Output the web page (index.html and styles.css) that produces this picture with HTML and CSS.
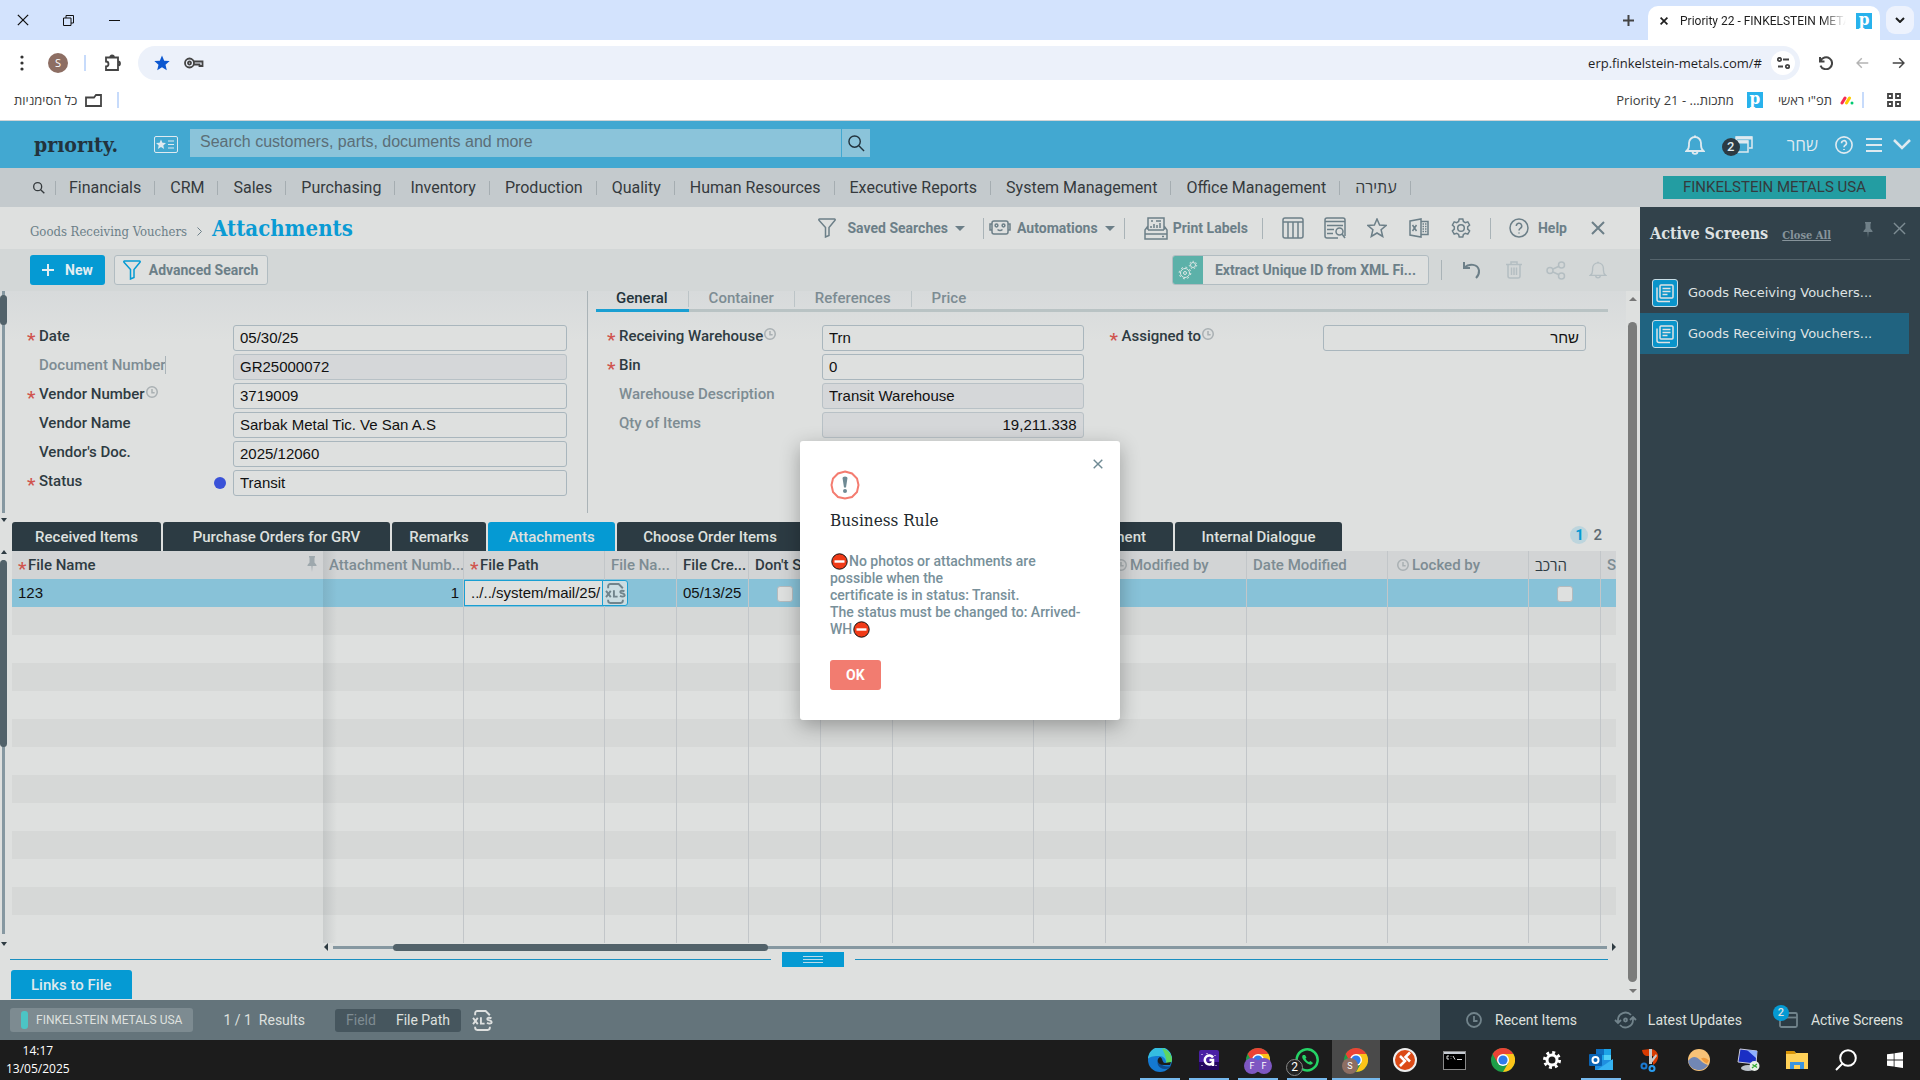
FILE: index.html
```html
<!DOCTYPE html>
<html lang="en">
<head>
<meta charset="utf-8">
<title>Priority 22 - FINKELSTEIN METALS USA</title>
<link rel="stylesheet" href="styles.css">
</head>
<body>
<svg class="sprite" aria-hidden="true">
  <symbol id="x" viewBox="0 0 14 14"><path d="M1 1l12 12M13 1L1 13"/></symbol>
  <symbol id="lens" viewBox="0 0 18 18"><circle cx="7" cy="7" r="6"/><path d="M11.5 11.5L17 17"/></symbol>
  <symbol id="funnel" viewBox="0 0 18 20"><path d="M1.500 1h15a.7.7 0 0 1 .5 1.200L11 9.500V17.500L7.500 19V9.500L1 2.200A.7.7 0 0 1 1.500 1z"/></symbol>
  <symbol id="bell" viewBox="0 0 20 20"><path d="M1.500 16h17c-2-1.500-2.500-3-2.500-6V8a6 6 0 0 0-12 0v2c0 3-.5 4.500-2.500 6zM7.500 16.500a2.500 2.300 0 0 0 5 0M9 1.500h2"/></symbol>
  <symbol id="help" viewBox="0 0 20 20"><circle cx="10" cy="10" r="9"/><path d="M7.300 8a2.700 2.700 0 1 1 4 2.300c-1 .6-1.300 1-1.300 2.200M10 14.500v1"/></symbol>
  <symbol id="pin" viewBox="0 0 10 16"><path d="M2 0h6v1.500H7.500V6.500L9.500 9v1H5.600L5 16l-.6-6H.5V9l2-2.500v-5H2z"/></symbol>
  <symbol id="clock" viewBox="0 0 16 16"><circle cx="8" cy="8" r="7"/><path d="M8 4v5h3.500"/></symbol>
  <symbol id="xls" viewBox="0 0 20 20"><path d="M3 5V3a2 2 0 0 1 2-2h8l4 4M3 16v1a2 2 0 0 0 2 2h10a2 2 0 0 0 2-2v-1M1 7.500l4.500 6M5.500 7.500l-4.500 6M8.500 7v6H12M18.500 8c-1.500-1-4-.8-4 .6 0 1.700 4.300 1 4.300 3 0 1.600-3 1.700-4.500.6"/></symbol>
  <symbol id="gear" viewBox="0 0 20 20"><path d="M8.200 1h3.600l.6 2.500 1.900 1.100 2.500-.8 1.800 3.200-1.900 1.800v2.300l1.900 1.800-1.800 3.200-2.500-.8-1.900 1.100-.6 2.500H8.200l-.6-2.500-1.900-1.100-2.500.8-1.800-3.200 1.900-1.800V8.800L1.400 7l1.800-3.200 2.500.8 1.900-1.100z"/><circle cx="10" cy="10" r="3.300"/></symbol>
  <symbol id="docs" viewBox="0 0 20 20"><rect x="5" y="2" width="13" height="13" rx="1"/><path d="M2 4.500v12a2 2 0 0 0 2 2h11M7.500 5.500h8M7.500 8.500h8M7.500 11.500h5"/></symbol>
  <symbol id="arrow" viewBox="0 0 18 16"><path d="M1 8h15M10 1.500L16.500 8 10 14.500"/></symbol>
  <symbol id="chrome" viewBox="0 0 24 24"><circle cx="12" cy="12" r="12" fill="#1e9e48"/><path d="M1.600 6A12 12 0 0 1 22.400 6H12l-5.200 9z" fill="#ea4335"/><path d="M22.400 6A12 12 0 0 1 12 24l5.200-9L12 6z" fill="#fcc419"/><circle cx="12" cy="12" r="6" fill="#fff"/><circle cx="12" cy="12" r="4.600" fill="#2f7bea"/></symbol>
  <symbol id="noentry" viewBox="0 0 17 17"><circle cx="8.500" cy="8.500" r="7.700" fill="#f03a17" stroke="#111" stroke-width="1"/><rect x="3.500" y="7.300" width="10" height="2.400" fill="#fff"/></symbol>
</svg>

<header class="browser">
  <div class="tabstrip">
    <button class="wbtn" aria-label="Close"><svg width="12" height="12"><use href="#x"/></svg></button>
    <button class="wbtn" aria-label="Restore"><svg width="11" height="11" viewBox="0 0 11 11"><path d="M.5 3h7.500v7.500H.5zM3 3V.5h7.500V8H8"/></svg></button>
    <button class="wbtn" aria-label="Minimize"><svg width="11" height="11" viewBox="0 0 11 11"><path d="M0 5.500h11"/></svg></button>
    <span class="grow"></span>
    <button class="wbtn plus" aria-label="New tab"><svg width="11" height="11" viewBox="0 0 11 11"><path d="M0 5.500h11M5.500 0v11"/></svg></button>
    <div class="tab">
      <button class="tabx" aria-label="Close tab"><svg width="8" height="8"><use href="#x"/></svg></button>
      <span class="tabtitle">Priority 22 - FINKELSTEIN METALS USA</span>
      <span class="favicon">p</span>
    </div>
    <button class="tabmenu" aria-label="Search tabs"><svg width="10" height="6" viewBox="0 0 10 6"><path d="M1 1l4 4 4-4"/></svg></button>
  </div>
  <div class="toolbar">
    <button class="ibtn dots" aria-label="Menu"><svg width="4" height="16" viewBox="0 0 4 16"><circle cx="2" cy="2" r="1.600"/><circle cx="2" cy="8" r="1.600"/><circle cx="2" cy="14" r="1.600"/></svg></button>
    <span class="avatar">S</span>
    <i class="bar"></i>
    <button class="ibtn puzzle" aria-label="Extensions"><svg width="18" height="18" viewBox="0 0 18 18"><path d="M2 3.500h12v12.500H2v-3.500a2.500 2.500 0 0 0 0-5zM6 3.500a2 2 0 0 1 4 0M14 7.500a2 2 0 0 1 0 4"/></svg></button>
    <div class="address">
      <svg class="star" width="16" height="16" viewBox="0 0 16 16"><path d="M8 .5l2.200 5.200 5.500.4-4.200 3.600 1.300 5.500L8 12.200l-4.800 3 1.300-5.500L.3 6.100l5.500-.4z"/></svg>
      <svg class="line" width="20" height="12" viewBox="0 0 20 12"><circle cx="5.500" cy="6" r="4.500"/><circle cx="5.500" cy="6" r="1.500"/><path d="M10 4.500h8.500v4.500h-3V7.500H9.500"/></svg>
      <input class="url" aria-label="Address" value="erp.finkelstein-metals.com/#">
      <span class="tune"><svg class="line" width="13" height="12" viewBox="0 0 13 12"><circle cx="2.500" cy="2.500" r="1.700"/><path d="M6 2.500h6M1 9.500h5"/><circle cx="10.500" cy="9.500" r="1.700"/></svg></span>
    </div>
    <button class="ibtn nav" aria-label="Reload"><svg width="14" height="14" viewBox="0 0 14 14"><path d="M1 1v4.500h4.500M1.500 5A6 6 0 1 1 1.500 9.500"/></svg></button>
    <button class="ibtn nav faded" aria-label="Forward"><svg class="flip" width="13" height="12"><use href="#arrow"/></svg></button>
    <button class="ibtn nav" aria-label="Back"><svg width="13" height="12"><use href="#arrow"/></svg></button>
  </div>
  <nav class="bookmarks">
    <a href="#all">כל הסימניות</a>
    <svg class="line" width="17" height="13" viewBox="0 0 17 13"><path d="M1 3.500h8l2-2.500h5v11H1z"/></svg>
    <i class="bar"></i>
    <span class="grow"></span>
    <a href="#p21" dir="rtl">מתכות... - Priority 21</a>
    <span class="favicon bm">p</span>
    <a href="#t">תפ"י ראשי</a>
    <svg width="14" height="9" viewBox="0 0 14 9" stroke-linecap="round" stroke-width="3"><path d="M2 7l3-5" stroke="#f62b54"/><path d="M6.500 7l3-5" stroke="#fc0"/><path d="M12 7v0" stroke="#00ca72"/></svg>
    <i class="bar"></i>
    <svg class="line apps" width="14" height="14" viewBox="0 0 14 14"><path d="M1 1h4v4H1zM9 1h4v4H9zM1 9h4v4H1zM9 9h4v4H9z"/></svg>
  </nav>
</header>

<div class="app">
  <header class="apphead">
    <a class="logo" href="#home">prıorıty.</a>
    <svg class="card" width="24" height="17" viewBox="0 0 24 17"><rect x=".5" y=".5" width="23" height="16" rx="1.500"/><path d="M14 5h6M14 8.500h6M14 12h6"/><path class="fill" d="M7 3.500l1.400 3.300 3.600.3-2.700 2.400.8 3.500L7 11.100 3.900 13l.8-3.500L2 7.100l3.600-.3z"/></svg>
    <form class="search"><input type="text" aria-label="Search" placeholder="Search customers, parts, documents and more"><button type="button" aria-label="Search"><svg width="17" height="17"><use href="#lens"/></svg></button></form>
    <span class="grow"></span>
    <div class="headicons">
      <svg class="hbell" width="20" height="20"><use href="#bell"/></svg>
      <span class="wins"><b>2</b><svg width="18" height="17" viewBox="0 0 18 17"><path d="M1 4V1h16v11h-3M1 5h12v11H1"/><path d="M1 2h16M1 6h12" stroke-width="3"/></svg></span>
      <span class="user">שחר</span>
      <svg class="hhelp" width="18" height="18"><use href="#help"/></svg>
      <svg class="burger" width="16" height="14" viewBox="0 0 16 14"><path d="M0 1h16M0 7h16M0 13h16"/></svg>
      <svg class="chev" width="18" height="11" viewBox="0 0 18 11"><path d="M1 1l8 8 8-8"/></svg>
    </div>
  </header>
  <nav class="menu">
    <svg class="menulens" width="12" height="12"><use href="#lens"/></svg>
    <a href="#1">Financials</a><a href="#2">CRM</a><a href="#3">Sales</a><a href="#4">Purchasing</a><a href="#5">Inventory</a><a href="#6">Production</a><a href="#7">Quality</a><a href="#8">Human Resources</a><a href="#9">Executive Reports</a><a href="#10">System Management</a><a href="#11">Office Management</a><a href="#12">עתירה</a>
    <span class="grow"></span>
    <span class="company">FINKELSTEIN METALS USA</span>
  </nav>

  <div class="work">
    <main class="main">
      <div class="titlebar">
        <div class="crumbs"><a href="#grv">Goods Receiving Vouchers</a><svg width="5" height="9" viewBox="0 0 5 9"><path d="M.5.500l4 4-4 4"/></svg><h1>Attachments</h1></div>
        <div class="tools">
          <button class="saved"><svg width="18" height="20"><use href="#funnel"/></svg>Saved Searches<i class="caret"></i></button>
          <i class="sep"></i>
          <button class="auto"><svg width="22" height="16" viewBox="0 0 22 16"><rect x="3" y="1" width="16" height="13" rx="2"/><circle cx="7.500" cy="5.500" r="1.400"/><circle cx="14.500" cy="5.500" r="1.400"/><path d="M8.500 9.500q2.500 2 5 0M3 4H1v6h2M19 4h2v6h-2"/></svg>Automations<i class="caret"></i></button>
          <i class="sep"></i>
          <button class="print"><svg width="24" height="23" viewBox="0 0 24 23"><path d="M4 13V1h16v12M4 9L1 13v9h22v-9l-3-4M4 13h16M1.500 17h21M7 11V9M10 11V7M13 11V8M16 11V6M7 4h2M12 4h5M18 19.500h2"/></svg>Print Labels</button>
          <i class="sep"></i>
          <button class="tool" aria-label="Table"><svg width="22" height="22" viewBox="0 0 22 22"><rect x="1" y="1" width="20" height="20" rx="2"/><path d="M1 5h20M6 5v16M11 5v16M16 5v16"/></svg></button>
          <button class="tool" aria-label="Form view"><svg width="22" height="22" viewBox="0 0 22 22"><path d="M14 21H3a2 2 0 0 1-2-2V3a2 2 0 0 1 2-2h16a2 2 0 0 1 2 2v16M1 4.500h20M3 8.500h16M3 12.500h7M3 16.500h6"/><circle cx="15.500" cy="14.500" r="3.500"/><path d="M18 17l3 4"/></svg></button>
          <button class="tool" aria-label="Favorite"><svg width="20" height="20" viewBox="0 0 20 20"><path d="M10 1l2.600 6 6.400.5-4.900 4.200 1.600 6.800L10 15l-5.700 3.500 1.600-6.800L1 7.500 7.400 7z"/></svg></button>
          <button class="tool" aria-label="Excel"><svg width="20" height="20" viewBox="0 0 20 20"><path d="M1 3l11-2v18L1 17zM12 3.500h7v13h-7M3.500 7l4 6M7.500 7l-4 6M13.500 6h1.500M16 6h1.500M13.500 8.500h1.500M16 8.500h1.500M13.500 11h1.500M16 11h1.500M13.500 13.500h1.500M16 13.500h1.500"/></svg></button>
          <button class="tool" aria-label="Settings"><svg width="20" height="20"><use href="#gear"/></svg></button>
          <i class="sep"></i>
          <button class="helpbtn"><svg width="20" height="20"><use href="#help"/></svg>Help</button>
          <button class="close" aria-label="Close screen"><svg width="14" height="14"><use href="#x"/></svg></button>
        </div>
      </div>
      <div class="actions">
        <button class="new"><svg width="12" height="12" viewBox="0 0 12 12"><path d="M0 6h12M6 0v12"/></svg>New</button>
        <button class="adv"><svg width="18" height="20"><use href="#funnel"/></svg>Advanced Search</button>
        <span class="grow"></span>
        <button class="extract"><span class="gears"><svg width="20" height="20" viewBox="0 0 20 20"><circle cx="7" cy="13" r="4.500"/><circle cx="7" cy="13" r="1.500"/><circle cx="7" cy="13" r="5.800" stroke-dasharray="2 2.500"/><circle cx="15" cy="5" r="2.500"/><circle cx="15" cy="5" r="3.700" stroke-dasharray="1.500 1.800"/></svg></span><span class="exlabel">Extract Unique ID from XML Fi...</span></button>
        <i class="sep"></i>
        <button class="act on" aria-label="Undo"><svg width="18" height="18" viewBox="0 0 18 18"><path d="M1 1v6h6M1.500 6.500C6 2 15 3 16 9.500c.3 3-1 5.500-3 7.500"/></svg></button>
        <button class="act" aria-label="Delete"><svg width="18" height="18" viewBox="0 0 18 18"><path d="M1 3.500h16M6 3.500V1h6v2.500M3 3.500V15a2 2 0 0 0 2 2h8a2 2 0 0 0 2-2V3.500M6.500 6.500v7.500M9 6.500v7.500M11.500 6.500v7.500"/></svg></button>
        <button class="act" aria-label="Share"><svg width="20" height="19" viewBox="0 0 20 19"><circle cx="4" cy="9.500" r="3"/><circle cx="15.500" cy="4" r="3"/><circle cx="15.500" cy="15" r="3"/><path d="M7 8l6-2.800M7 11l6 2.800"/></svg></button>
        <button class="act" aria-label="Notify"><svg width="18" height="18"><use href="#bell"/></svg></button>
      </div>

      <div class="content">
        <div class="page">
          <div class="upper">
            <div class="rail"><b class="r1"></b><i class="dn"></i></div>
            <div class="lform">
              <label for="f1" class="req">Date</label><input id="f1" value="05/30/25">
              <label for="f2" class="ro caretline">Document Number</label><input id="f2" readonly value="GR25000072">
              <label for="f3" class="req">Vendor Number<svg width="12" height="12"><use href="#clock"/></svg></label><input id="f3" value="3719009">
              <label for="f4">Vendor Name</label><input id="f4" value="Sarbak Metal Tic. Ve San A.S">
              <label for="f5">Vendor's Doc.</label><input id="f5" value="2025/12060">
              <label for="f6" class="req status">Status</label><input id="f6" value="Transit">
            </div>
            <div class="rform">
              <div class="subtabs"><button class="cur">General</button><button>Container</button><button>References</button><button>Price</button></div>
              <div class="cols">
                <div class="fields">
                  <label for="g1" class="req">Receiving Warehouse<svg width="12" height="12"><use href="#clock"/></svg></label><input id="g1" value="Trn">
                  <label for="g2" class="req">Bin</label><input id="g2" value="0">
                  <label for="g3" class="ro">Warehouse Description</label><input id="g3" readonly value="Transit Warehouse">
                  <label for="g4" class="ro">Qty of Items</label><input id="g4" class="num" readonly value="19,211.338">
                </div>
                <div class="fields second">
                  <label for="h1" class="req">Assigned to<svg width="12" height="12"><use href="#clock"/></svg></label><input id="h1" dir="rtl" value="שחר">
                </div>
              </div>
            </div>
          </div>

          <div class="lower">
            <div class="rail low"><i class="up"></i><b class="r2"></b><i class="dn"></i></div>
            <div class="gridzone">
              <div class="tabs">
                <button class="t1">Received Items</button><button class="t2">Purchase Orders for GRV</button><button class="t3">Remarks</button><button class="t4 cur">Attachments</button><button class="t5">Choose Order Items</button><button class="t6">Shipment</button><button class="t7">Internal Dialogue</button>
                <span class="grow"></span>
                <span class="pager"><b>1</b>2</span>
              </div>
              <div class="tablewrap">
              <table>
                <colgroup><col class="c311"><col class="c141"><col class="c141"><col class="c72"><col class="c72"><col class="c72"><col class="c72"><col class="c141"><col class="c72"><col class="c141"><col class="c141"><col class="c141"><col class="c72"><col></colgroup>
                <thead><tr><th class="req first">File Name<svg class="pinned" width="10" height="16"><use href="#pin"/></svg></th><th class="ro">Attachment Numb...</th><th class="req">File Path</th><th class="ro">File Na...</th><th>File Cre...</th><th>Don't S</th><th></th><th></th><th></th><th class="ro"><svg width="12" height="12"><use href="#clock"/></svg>Modified by</th><th class="ro">Date Modified</th><th class="ro"><svg width="12" height="12"><use href="#clock"/></svg>Locked by</th><th class="heb">הרכב</th><th class="ro">S</th></tr></thead>
                <tbody>
                <tr class="sel"><td>123</td><td class="right">1</td><td class="edit"><input aria-label="File Path" value="../../system/mail/25/"><button aria-label="Open XLS"><svg width="21" height="21"><use href="#xls"/></svg></button></td><td></td><td>05/13/25</td><td class="mid"><input type="checkbox" aria-label="Don't send"></td><td></td><td></td><td></td><td></td><td></td><td></td><td class="mid"><input type="checkbox" aria-label="הרכב"></td><td></td></tr>
                <tr><td><td><td><td><td><td><td><td><td><td><td><td><td><td></tr>
                <tr><td><td><td><td><td><td><td><td><td><td><td><td><td><td></tr>
                <tr><td><td><td><td><td><td><td><td><td><td><td><td><td><td></tr>
                <tr><td><td><td><td><td><td><td><td><td><td><td><td><td><td></tr>
                <tr><td><td><td><td><td><td><td><td><td><td><td><td><td><td></tr>
                <tr><td><td><td><td><td><td><td><td><td><td><td><td><td><td></tr>
                <tr><td><td><td><td><td><td><td><td><td><td><td><td><td><td></tr>
                <tr><td><td><td><td><td><td><td><td><td><td><td><td><td><td></tr>
                <tr><td><td><td><td><td><td><td><td><td><td><td><td><td><td></tr>
                <tr><td><td><td><td><td><td><td><td><td><td><td><td><td><td></tr>
                <tr><td><td><td><td><td><td><td><td><td><td><td><td><td><td></tr>
                <tr><td><td><td><td><td><td><td><td><td><td><td><td><td><td></tr>
                </tbody>
              </table>
              </div>
              <div class="hscroll"><i class="lf"></i><span class="track"><b></b></span><i class="rt"></i></div>
            </div>
          </div>
          <div class="splitter"><i></i><b><svg width="20" height="7" viewBox="0 0 20 7"><path d="M0 .5h20M0 3.500h20M0 6.500h20"/></svg></b><i></i></div>
          <button class="links">Links to File</button>
        </div>
        <div class="vscroll"><i class="up"></i><b></b><i class="dn"></i></div>
      </div>
    </main>

    <aside class="panel">
      <div class="panelhead"><h2>Active Screens</h2><a href="#closeall">Close All</a><span class="grow"></span><svg class="ppin" width="10" height="16"><use href="#pin"/></svg><svg class="px" width="13" height="13"><use href="#x"/></svg></div>
      <a class="item" href="#s1"><span><svg width="20" height="20"><use href="#docs"/></svg></span>Goods Receiving Vouchers...</a>
      <a class="item cur" href="#s2"><span><svg width="20" height="20"><use href="#docs"/></svg></span>Goods Receiving Vouchers...</a>
    </aside>
  </div>

  <footer class="statusbar">
    <span class="chip"><i></i>FINKELSTEIN METALS USA</span>
    <span class="results">1 / 1&nbsp; Results</span>
    <span class="field"><em>Field</em>File Path</span>
    <svg class="sxls" width="21" height="21"><use href="#xls"/></svg>
    <span class="grow"></span>
    <div class="quick">
      <button class="q1"><svg width="16" height="16"><use href="#clock"/></svg>Recent Items</button>
      <button class="q2"><svg width="23" height="18" viewBox="0 0 23 18"><path d="M4 12V9a7.500 7.500 0 0 1 13-5M1 9l3 3 3-3M19 6v3a7.500 7.500 0 0 1-13 5M22 9l-3-3-3 3"/><circle cx="11.500" cy="9" r="1.500"/></svg>Latest Updates</button>
      <button class="q3"><b>2</b><svg width="19" height="16" viewBox="0 0 19 16"><rect x="1" y="1" width="17" height="14" rx="1.500"/><path d="M1 5.500h17"/></svg>Active Screens</button>
    </div>
  </footer>

  <div class="overlay">
    <section class="dialog" role="dialog" aria-labelledby="dt">
      <button class="dx" aria-label="Close"><svg width="10" height="10"><use href="#x"/></svg></button>
      <svg class="warn" width="30" height="30" viewBox="0 0 30 30"><path d="M15 1.500l7 2 5 5 1.500 6.500-1.500 7-5 5-7 1.500-7-1.500-5-5-1.500-7L3 8.500l5-5z" fill="none" stroke="#f47c70" stroke-width="2"/><g stroke="none" fill="#6f8a94"><path d="M12.500 8q0-1.500 2.500-1.500t2.500 1.500L16 17.500h-2z"/><circle cx="15" cy="21" r="2"/></g></svg>
      <h2 id="dt">Business Rule</h2>
      <p><svg width="19" height="17"><use href="#noentry"/></svg>No photos or attachments are possible when the<br>certificate is in status: Transit.<br>The status must be changed to: Arrived-WH<svg width="19" height="17"><use href="#noentry"/></svg></p>
      <button class="ok">OK</button>
    </section>
  </div>
</div>

<footer class="taskbar">
  <time>14:17<br>13/05/2025</time>
  <span class="grow"></span>
  <button class="run" aria-label="Edge"><svg width="24" height="24" viewBox="0 0 24 24"><circle cx="12" cy="12" r="12" fill="#1479d2"/><path d="M0 11A12 12 0 0 1 24 11c0 4-3 6-7 6 3-4-1-10-7-9C5 8 1 9 0 11z" fill="#35bde0"/><path d="M14 .3A12 12 0 0 1 24 11c0 4-3 6-7 6 3-2 1-9-3-16.700z" fill="#5fd55f"/><path d="M12 9c-5 5-2 12 5 12 3 0 5-1 6-3-3 1-9 1-10-3z" fill="#0f4a8c"/><path d="M12 9c-4 2-3 8 4 8h6l1-3-6 1c-3 0-2-5-5-6z" fill="#1c1c1c"/></svg></button>
  <button class="run" aria-label="G"><svg width="20" height="20" viewBox="0 0 20 20"><rect width="20" height="20" rx="2" fill="#4a1fa5"/><rect y="12" width="20" height="8" fill="#230660"/><path d="M14 7.500a4.500 4.500 0 1 0 0 5V10h-3.500M14 12v4" fill="none" stroke="#fff" stroke-width="2.500"/><path d="M3 4v1M8 3v1M16 5v1M3 15v1M17 15v1" stroke="#fff"/></svg></button>
  <button class="run" aria-label="Chrome profiles"><svg width="24" height="24"><use href="#chrome"/></svg><span class="dot f1">F</span><span class="dot f2">F</span></button>
  <button class="run" aria-label="WhatsApp"><svg width="24" height="24" viewBox="0 0 24 24"><path d="M1.500 22.500L3 17A10.500 10.500 0 1 1 7 21z" fill="#1c1c1c" stroke="#25d366" stroke-width="2.500"/><path d="M8 7c-2 2 0 5 3 7.500s5.500 3 7 .5l-2.500-2-1.500 1c-1.500-.5-3-2-3.500-3.500l1-1L10 7z" fill="#25d366"/></svg><span class="dot wa">2</span></button>
  <button class="run active" aria-label="Chrome"><svg width="24" height="24"><use href="#chrome"/></svg><span class="dot s1">S</span></button>
  <button aria-label="Remote"><svg width="24" height="24" viewBox="0 0 24 24"><circle cx="12" cy="12" r="11" fill="#dc4a16" stroke="#eee" stroke-width="2"/><path d="M7 8l5 5-5 5M17 4.500l-4.500 4.500L17 13.500" fill="none" stroke="#fff" stroke-width="2.500"/></svg></button>
  <button aria-label="Terminal"><svg width="23" height="19" viewBox="0 0 23 19"><rect x=".5" y=".5" width="22" height="18" fill="#000" stroke="#8a8a8a"/><path d="M1 2h21" stroke="#c7ccd4" stroke-width="2"/><path d="M6 5H4v3h2M8 5.500v.5M8 7.500v.5M10 5l2 3.500M14 8.500h5" stroke="#ddd" fill="none"/></svg></button>
  <button aria-label="Chrome"><svg width="24" height="24"><use href="#chrome"/></svg></button>
  <button aria-label="Settings"><svg width="18" height="18" viewBox="0 0 18 18"><g stroke="#fff" stroke-width="3"><circle cx="9" cy="9" r="5"/><circle cx="9" cy="9" r="7.500" stroke-dasharray="2.900 2.990"/></g></svg></button>
  <button class="run" aria-label="Outlook"><svg width="24" height="22" viewBox="0 0 24 22"><path d="M7 0h15v12H7z" fill="#1ca4e8"/><path d="M7 0h8v6H7z" fill="#0f6fc0"/><path d="M15 6h7v6h-7z" fill="#50d0f7"/><path d="M6 11l18 0v10H6z" fill="#1f8fe0"/><path d="M24 10v11L8 21z" fill="#35b3f2"/><rect y="5" width="13" height="12" rx="1" fill="#0a64b5"/><circle cx="6.500" cy="11" r="3" fill="none" stroke="#fff" stroke-width="2"/></svg></button>
  <button aria-label="Snip"><svg width="20" height="24" viewBox="0 0 20 24"><path d="M2 2l8-1c6 0 9 5 8 9s-3 6-5 7V8H9C6 8 3 8 2 2z" fill="#d83b01"/><path d="M9 1h3v15H9zM10 13l6-7 1 2-6 8z" fill="#c9c9c9"/><circle cx="4" cy="18" r="2.500" fill="none" stroke="#1b7ad1" stroke-width="2"/><circle cx="12" cy="20.500" r="2.500" fill="none" stroke="#2a9df0" stroke-width="2"/></svg></button>
  <button aria-label="Weather"><svg width="22" height="22" viewBox="0 0 22 22"><circle cx="11" cy="11" r="11" fill="#f8c277"/><path d="M13 9.500q4-2 8 2l-2 3q-3-1-6-5z" fill="#ef9a3c"/><path d="M0 12C4 7 8 7 12 11c3 3 5 4 8 5A11 11 0 0 1 0 12z" fill="#7187b5"/></svg></button>
  <button aria-label="Remote desktop"><svg width="23" height="24" viewBox="0 0 23 24"><path d="M3 1l17 2-1 13L1 14z" fill="#1a2fc4" stroke="#ccd" /><path d="M10 2l10 1-1 7z" fill="#8fb0ff"/><ellipse cx="11" cy="20" rx="7" ry="3" fill="#bcc3cb"/><circle cx="17.500" cy="18" r="5" fill="#e8efe8"/><path d="M15 20l5-4M15.500 16.500l2 1.500M18 18l2 1.500" stroke="#3a3" stroke-width="1.300"/></svg></button>
  <button aria-label="Explorer"><svg width="22" height="18" viewBox="0 0 22 18"><path d="M0 0h8l2 2h12v16H0z" fill="#ffd158"/><path d="M0 0h8l2 3H0z" fill="#d99508"/><path d="M4 18v-7h14v7h-4v-4H8v4z" fill="#3b94e0"/></svg></button>
  <button aria-label="Search"><svg class="flip" width="22" height="22" viewBox="0 0 22 22"><g stroke="#fff" stroke-width="2"><circle cx="9" cy="9" r="7.800"/><path d="M14.500 14.500L21 21"/></g></svg></button>
  <button aria-label="Start"><svg width="16" height="16" viewBox="0 0 16 16"><path fill="#fff" d="M0 2.300L6.700 1.400v6.200H0zM7.500 1.200L16 0v7.600H7.500zM0 8.400h6.700v6.200L0 13.700zM7.500 8.400H16V16l-8.500-1.200z"/></svg></button>
</footer>
</body>
</html>
```

FILE: styles.css
```css
* { box-sizing: border-box; }
body {
  margin: 0;
  min-height: 100vh;
  display: flex;
  flex-direction: column;
  font-family: Roboto, "Open Sans", sans-serif;
  font-size: 15px;
  color: #2e3b42;
  background: #dee0df;
}
button { font: inherit; color: inherit; background: none; border: 0; padding: 0; display: flex; align-items: center; }
a { color: inherit; text-decoration: none; }
h1, h2, p { margin: 0; }
svg { fill: none; stroke: currentColor; flex: none; }
.sprite { position: absolute; width: 0; height: 0; }
.grow { flex: 1; }
.flip { transform: scaleX(-1); }

/* Browser frame */
.browser { background: #fff; border-bottom: 1px solid #d0d4d6; color: #1f1f1f; font-family: "Open Sans", sans-serif; }
.tabstrip { height: 40px; display: flex; align-items: center; background: #d3e3fd; }
.wbtn { width: 46px; height: 40px; justify-content: center; color: #111; }
.wbtn:first-child { width: 45px; stroke-width: 1.500; }
.wbtn.plus { width: 40px; stroke-width: 2; color: #444; }
.tab { align-self: flex-end; display: flex; align-items: center; width: 232px; height: 34px; padding: 0 8px 5px 12px; background: #fff; border-radius: 10px 10px 0 0; font: 12px Roboto, sans-serif; }
.tabx svg { stroke-width: 3; }
.tabtitle { flex: 1; margin: 0 10px 0 12px; overflow: hidden; white-space: nowrap; -webkit-mask-image: linear-gradient(90deg, #000 85%, transparent); mask-image: linear-gradient(90deg, #000 85%, transparent); }
.favicon { width: 16px; height: 16px; background: #28b2ec; color: #fff; font: bold 17px/12px "DejaVu Serif Condensed", "DejaVu Serif", serif; text-align: center; }
.tabmenu { width: 28px; height: 28px; margin: 0 6px; justify-content: center; background: #edf2fd; border-radius: 9px; stroke-width: 2; }
.toolbar { height: 46px; padding: 0 14px 0 10px; display: flex; align-items: center; }
.dots { width: 24px; justify-content: center; color: #333; }
.dots svg { fill: currentColor; stroke: none; }
.avatar { width: 20px; height: 20px; margin-left: 14px; border-radius: 50%; background: #8d6e63; color: #fff; font-size: 11px; line-height: 20px; text-align: center; }
.bar { width: 2px; height: 16px; background: #c7dbfb; }
.toolbar .bar { margin-left: 16px; }
.puzzle { margin: 0 16px 0 18px; color: #444; stroke-width: 1.800; }
.address { flex: 1; height: 34px; padding: 0 5px 0 16px; display: flex; align-items: center; gap: 14px; background: #ecf1fa; border-radius: 17px; }
.star { fill: #0b57d0; stroke: none; }
.line { stroke-width: 1.800; color: #444; }
.url { flex: 1; border: 0; background: none; text-align: right; font: 13px "Open Sans", sans-serif; color: #1f1f1f; padding: 0; margin-right: -5px; }
.tune { width: 24px; height: 24px; border-radius: 50%; background: #fff; display: flex; align-items: center; justify-content: center; }
.nav { width: 36px; justify-content: center; stroke-width: 2; color: #444; }
.nav:nth-last-child(3) { margin-left: 8px; }
.nav:last-child { margin-right: -10px; }
.faded { color: #b4b4b4; }
.bookmarks { height: 34px; padding: 0 19px 6px 14px; display: flex; align-items: center; font-size: 13px; line-height: 18px; color: #3c3c3c; }
.bookmarks > .line:first-of-type { margin-left: 8px; }
.bookmarks .bar { margin-left: 15px; }
.bookmarks .favicon.bm { margin: 0 15px 0 13px; }
.bookmarks a + svg { margin-left: 8px; }
.bookmarks svg + .bar:nth-last-child(2) { margin-left: 8px; margin-right: 23px; }

/* Application shell */
.app { flex: 1; position: relative; display: flex; flex-direction: column; }
.apphead { height: 47px; padding-left: 34px; display: flex; align-items: center; background: #42a8d1; color: #dfeaf0; }
.logo { width: 120px; font: bold 21px "DejaVu Serif Condensed", "DejaVu Serif", serif; color: #22333d; }
.card .fill { fill: currentColor; stroke: none; }
.search { flex: 0 1 680px; margin: 0 0 3px 12px; display: flex; gap: 1px; }
.search input { flex: 1; height: 28px; min-width: 0; border: 0; padding: 0 10px 2px; background: #8bc4da; font: 16px "Liberation Sans", Arial, sans-serif; color: #566a73; }
.search input::placeholder { color: #5b6e77; opacity: 1; }
.search button { width: 28px; height: 28px; justify-content: center; background: #8bc4da; color: #22333d; stroke-width: 1.500; }
.headicons { display: flex; align-items: center; padding-right: 9px; stroke-width: 1.800; }
.wins { display: flex; align-items: center; margin: 0 34px 0 17px; stroke-width: 1.500; }
.wins b { width: 18px; height: 18px; border-radius: 50%; background: #2c3a43; font-size: 13px; line-height: 18px; text-align: center; font-weight: 500; margin: 4px -5px 0 0; position: relative; }
.user { font: 17px "Open Sans", "Liberation Sans", sans-serif; margin-right: 17px; }
.burger { margin: 0 11px 0 13px; stroke-width: 2; }
.chev { stroke-width: 2.500; }
.menu { height: 39px; padding: 0 34px 0 33px; display: flex; align-items: center; background: #c4cacd; font-size: 16px; color: #353a3d; }
.menu svg { stroke-width: 2; margin-right: 10px; }
.menu a { line-height: 14px; padding: 0 13px 0 15px; border-right: 1px solid #a5adb1; white-space: nowrap; }
.menulens + a { border-left: 1px solid #a5adb1; padding-left: 13px; }
.company { background: #239da2; padding: 0 20px; line-height: 23px; font-size: 15px; }
.work { flex: 1; display: flex; }
.main { flex: 1; min-width: 0; display: flex; flex-direction: column; }

.titlebar { height: 42px; padding: 0 35px 0 30px; display: flex; align-items: center; justify-content: space-between; color: #6c7f88; }
.crumbs { display: flex; align-items: baseline; font: 13px "DejaVu Serif Condensed", "DejaVu Serif", serif; white-space: nowrap; }
.crumbs svg { margin: 0 10px; }
.crumbs h1 { font-size: 22px; font-weight: bold; color: #0a9bd4; }
.tools { display: flex; align-items: center; font-weight: 700; font-size: 14px; stroke-width: 1.500; white-space: nowrap; }
.sep { flex: none; width: 1px; height: 21px; background: #a9b3b7; }
.caret { width: 0; height: 0; border: 5px solid transparent; border-top-color: currentColor; border-bottom: 0; margin-left: 7px; }
.saved { margin-right: 18px; }
.saved svg { margin-right: 12px; }
.auto { margin: 0 9px 0 5px; }
.auto svg { margin-right: 6px; }
.print { margin: 0 14px 0 19px; }
.print svg { margin-right: 5px; }
.tool { width: 42px; justify-content: center; }
.sep + .tool { margin-left: 9px; }
.tool + .sep { margin-left: 8px; }
.helpbtn { margin-left: 18px; }
.helpbtn svg { margin-right: 9px; }
.close { margin-left: 24px; stroke-width: 2; }

.actions { height: 42px; padding: 0 32px 0 30px; display: flex; align-items: center; background: #d3d7d7; font-weight: 700; font-size: 14px; color: #6c7f88; white-space: nowrap; }
.new { height: 30px; padding: 0 12px; gap: 11px; background: #059ad3; color: #e4eef2; border-radius: 3px; stroke-width: 2; }
.adv { height: 30px; margin-left: 9px; padding: 0 9px 0 8px; gap: 8px; background: #dee0df; border: 1px solid #b1bcc1; border-radius: 3px; }
.adv svg { color: #059ad3; stroke-width: 1.500; }
.extract { height: 30px; border: 1px solid #b1bcc1; border-radius: 3px; background: #dee0df; overflow: hidden; }
.gears { width: 30px; height: 30px; display: flex; align-items: center; justify-content: center; background: #5cb1a9; color: #dde8e6; }
.exlabel { padding: 0 12px; }
.actions .sep { margin: 0 9px 0 12px; height: 20px; }
.act { width: 42px; justify-content: center; color: #b4bec2; stroke-width: 1.500; }
.act:last-child { margin-right: -11px; }
.act.on { color: #6c7f88; stroke-width: 2; }

/* Screen body */
.content { flex: 1; display: flex; }
.page { flex: 1; min-width: 0; }
.vscroll { width: 13px; margin-right: 1px; display: flex; flex-direction: column; align-items: center; padding: 6px 0 7px; color: #777; }
.vscroll b { flex: 1; width: 9px; margin: 21px 0 7px; background: #7b7c7b; border-radius: 5px; }
.up, .dn, .lf, .rt { width: 0; height: 0; border: 4px solid transparent; }
.up { border-bottom-color: currentColor; border-top: 0; }
.dn { border-top-color: currentColor; border-bottom: 0; }
.lf { border-right-color: currentColor; border-left: 0; }
.rt { border-left-color: currentColor; border-right: 0; }
.rail { width: 7px; display: flex; flex-direction: column; align-items: center; background: linear-gradient(90deg, transparent 2px, #8698a1 2px, #8698a1 5px, transparent 5px) 0 0 / 100% calc(100% - 13px) no-repeat; }
.rail b { width: 7px; background: #52626a; border-radius: 4px; }
.rail .dn { margin-top: auto; border-width: 3px; border-top-width: 4px; border-bottom: 0; }
.r1 { height: 30px; margin-top: 4px; }
.upper { height: 231px; display: flex; background: linear-gradient(#d7dadb, #dee0df 50px); }
.upper .rail { background-size: 100% 222px; }
.lform { width: 581px; height: 222px; padding: 34px 20px 0 20px; display: grid; grid-template-columns: 206px 1fr; grid-auto-rows: 26px; row-gap: 3px; align-items: center; border-right: 1px solid #aab3b7; }
label { position: relative; display: flex; align-items: flex-start; padding: 0 0 4px 12px; font-weight: 500; line-height: 18px; white-space: nowrap; }
label svg { margin: 1px 0 0 1px; color: #a9b0b3; stroke-width: 2; }
.req::before { content: "*"; color: #d0544e; font-weight: 500; font-size: 19px; width: 12px; margin-left: -12px; line-height: 26px; height: 18px; }
.ro { color: #7d8c93; }
.caretline::after { content: ""; width: 1px; height: 18px; background: #a9b3b8; }
.status::after { content: ""; margin: 5px 7px 0 auto; width: 12px; height: 12px; border-radius: 50%; background: #3a52d8; }
.lform input, .fields input { width: 100%; min-width: 0; height: 26px; border: 1px solid #a9b6bd; border-radius: 3px; background: #dee0df; padding: 0 6px 2px; font: 15px "Liberation Sans", Arial, sans-serif; color: #111; }
.lform input:read-only, .fields input:read-only { background: #d5d7d9; border-color: #b8c1c6; }
.num { text-align: right; }
.rform { flex: 1; min-width: 0; padding: 0 18px 0 8px; }
.subtabs { height: 21px; display: flex; align-items: flex-start; box-shadow: inset 0 -3px #b9c3c4; }
.subtabs button { height: 21px; padding: 0 21px 7px 20px; font-weight: 500; color: #7d8c93; background: linear-gradient(#bcc4c7, #bcc4c7) 100% 0 / 1px 16px no-repeat; }
.subtabs button.cur { color: #24343c; box-shadow: inset 0 -3px #1a9fd2; }
.subtabs button:last-child { background: none; }
.cols { display: flex; padding: 13px 22px 0 11px; gap: 26px; }
.fields { flex: 1; display: grid; grid-template-columns: 215px 1fr; grid-auto-rows: 26px; row-gap: 3px; align-items: center; align-content: start; }
.fields.second { grid-template-columns: 213px 1fr; }

.lower { display: flex; height: 430px; color: #2e3b42; }
.low { padding-top: 28px; margin-bottom: 6px; background: linear-gradient(90deg, transparent 2px, #8698a1 2px, #8698a1 5px, transparent 5px) 0 38px / 100% calc(100% - 50px) no-repeat; }
.low .up { border-width: 3px; border-bottom-width: 4px; border-top: 0; }
.r2 { height: 187px; margin-top: 6px; }
.gridzone { flex: 1; min-width: 0; padding: 0 10px 0 5px; display: flex; flex-direction: column; }
.tabs { display: flex; gap: 2px; height: 29px; }
.tabs button { justify-content: center; padding: 0; background: #2c3b43; color: #dee0df; font-weight: 500; border-radius: 3px 3px 0 0; white-space: nowrap; }
.tabs .cur { background: #059ad3; }
.t1 { width: 149px; } .t2 { width: 227px; } .t3 { width: 94px; } .t4 { width: 127px; } .t5 { width: 186px; } .t6 { width: 368px; } .t7 { width: 167px; }
.tabs .t6 { justify-content: flex-end; padding-right: 27px; }
.pager { display: flex; gap: 5px; height: 26px; align-items: center; margin-right: 14px; color: #5d6b72; font-weight: 500; }
.pager b { width: 18px; height: 18px; border-radius: 50%; background: #bdd5dd; color: #059ad3; text-align: center; line-height: 18px; }
.tablewrap { overflow: hidden; }
table { width: 100%; table-layout: fixed; border-collapse: separate; border-spacing: 0; }
.c311 { width: 311px; } .c141 { width: 141px; } .c72 { width: 72px; }
th, td { height: 28px; padding: 0 6px; text-align: left; white-space: nowrap; overflow: hidden; border-right: 1px solid #c2c6c9; }
th { background: #d2d4d5; font-weight: 500; line-height: 18px; }
th svg { color: #a9b0b3; stroke-width: 2; margin: 0 3px -1px 3px; }
th .pinned { float: right; fill: #9ea8ad; stroke: none; margin: 0; }
th.req::before { display: inline-block; vertical-align: top; margin: 0; width: 10px; }
th.heb { font-family: "Open Sans", "Liberation Sans", sans-serif; font-weight: 400; }
td { font: 15px "Liberation Sans", Arial, sans-serif; color: #111; padding-bottom: 2px; }
tbody tr:nth-child(even) { background: #d6d8d7; }
tr.sel { background: #88c2d8; }
tr > :first-child { border-right: 0; }
tr > :last-child { border-right: 0; }
td:nth-child(2), th:nth-child(2) { background-image: linear-gradient(90deg, rgba(60,70,75,.12), transparent 14px); }
.right { text-align: right; padding-right: 4px; }
.mid { text-align: center; padding: 0; }
td.edit { position: relative; overflow: visible; padding: 0; }
.edit input { display: block; width: 139px; height: 26px; border: 1px solid #1a9fd2; background: #dee0df; padding: 0 0 2px 6px; font: inherit; color: inherit; }
.edit button { position: absolute; left: 138px; top: 1px; width: 26px; height: 26px; justify-content: center; background: #cbdde2; border: 1px solid #1a9fd2; border-radius: 0 3px 3px 0; color: #71848c; stroke-width: 1.800; }
input[type=checkbox] { appearance: none; width: 16px; height: 16px; margin: 0; border: 1px solid #b4babd; border-radius: 3px; background: #dee0df; vertical-align: middle; }
.hscroll { display: flex; align-items: center; height: 8px; margin-left: 312px; }
.track { flex: 1; margin: 0 5px; height: 7px; background: linear-gradient(transparent 2px, #8698a1 2px, #8698a1 5px, transparent 5px); }
.track b { display: block; width: 375px; height: 7px; margin-left: 60px; background: #52626a; border-radius: 4px; }
.splitter { display: flex; align-items: center; height: 15px; padding: 0 18px 0 10px; }
.splitter i { flex: 760; height: 1px; background: #1a8fc0; }
.splitter i:last-child { flex-grow: 753; }
.splitter b { width: 62px; height: 15px; margin: 0 11px; display: flex; align-items: center; justify-content: center; background: #059ad3; color: #b9dcea; }
.links { height: 29px; margin: 3px 0 0 11px; padding: 0 20px; background: #059ad3; color: #dee9ed; font-weight: 500; border-radius: 3px 3px 0 0; }

/* Side panel */
.panel { width: 280px; background: #32424b; color: #dfe2e3; }
.panelhead { display: flex; align-items: baseline; height: 53px; margin: 0 10px 12px; padding: 15px 4px 0 0; border-bottom: 1px solid #55646c; white-space: nowrap; }
.panelhead h2 { font: bold 16px/24px "DejaVu Serif Condensed", "DejaVu Serif", serif; }
.panelhead a { margin-left: 14px; font: bold 11px/24px "DejaVu Serif Condensed", "DejaVu Serif", serif; color: #87949b; text-decoration: underline; }
.ppin { fill: #6f7f87; stroke: none; align-self: flex-start; margin-right: 20px; }
.px { color: #7d8c93; align-self: flex-start; stroke-width: 1.500; }
.item { display: flex; align-items: center; gap: 10px; height: 41px; margin-right: 11px; padding-left: 12px; font: 13px "DejaVu Sans", sans-serif; white-space: nowrap; }
.item span { width: 26px; height: 28px; display: flex; align-items: center; justify-content: center; background: #0a94ca; border: 1px solid #c9dde5; border-radius: 3px; stroke-width: 1.500; }
.item.cur { background: #206380; }

/* Status bar */
.statusbar { height: 40px; padding-left: 10px; display: flex; align-items: center; background: #64747b; color: #dee0df; white-space: nowrap; }
.chip { height: 24px; padding: 0 11px; display: flex; align-items: center; gap: 8px; background: #7d8b91; border-radius: 3px; font-size: 12px; }
.chip i { width: 7px; height: 18px; border-radius: 3px; background: #4cc4c4; }
.results { margin: 0 30px; font-size: 14px; }
.field { height: 23px; padding: 0 11px; display: flex; align-items: center; background: #46565e; border-radius: 3px; font-size: 14px; }
.field em { font-style: normal; color: #7f8c92; margin-right: 20px; }
.sxls { margin-left: 11px; stroke-width: 1.800; }
.quick { align-self: stretch; width: 480px; padding: 0 17px 0 26px; display: flex; justify-content: space-between; background: #2c3b44; font-size: 14px; }
.quick svg { color: #71838b; stroke-width: 1.800; margin-right: 13px; }
.q2 svg { margin-right: 11px; }
.q3 { position: relative; }
.q3 b { position: absolute; left: -6px; top: 5px; width: 16px; height: 16px; border-radius: 50%; background: #059ad3; font-size: 11px; line-height: 16px; font-weight: 500; }

/* Message dialog */
.overlay { position: absolute; inset: 0; display: flex; align-items: center; justify-content: center; }
.dialog { position: relative; width: 320px; padding: 29px 30px 30px; background: #fff; border-radius: 3px; box-shadow: 0 6px 20px rgba(0,0,0,.3); }
.dx { position: absolute; right: 17px; top: 18px; color: #6f8a94; stroke-width: 2; }
.warn { display: block; }
.dialog h2 { margin: 8px 0 21px; font: 17px/24px "DejaVu Serif Condensed", "DejaVu Serif", serif; color: #22282c; }
.dialog p { font-weight: 500; font-size: 14px; line-height: 17px; color: #78909a; }
.dialog p svg { vertical-align: -4px; stroke: none; }
.ok { height: 30px; margin-top: 22px; padding: 0 16px; background: #f27c70; color: #fff; font-size: 14px; font-weight: 700; border-radius: 3px; }

/* Desktop taskbar */
.taskbar { height: 40px; padding-right: 1px; display: flex; align-items: center; gap: 1px; background: #1c1c1c; color: #fff; }
.taskbar time { margin-left: 6px; font: 12px/18px "Open Sans", sans-serif; text-align: center; }
.taskbar button { position: relative; width: 48px; height: 40px; justify-content: center; }
.taskbar svg { stroke: none; }
.run::after { content: ""; position: absolute; left: 4px; right: 4px; bottom: 0; height: 2px; background: #76b9ed; }
.active { background: #4a4a4a; }
.run.active::after { left: 0; right: 0; }
.dot { position: absolute; width: 16px; height: 16px; border-radius: 50%; background: #7e57c2; font-size: 9px; line-height: 16px; text-align: center; }
.f1 { left: 10px; top: 18px; z-index: 1; } .f2 { left: 22px; top: 18px; }
.s1 { left: 10px; top: 18px; background: #8d6e63; }
.wa { left: 3px; top: 19px; width: 17px; height: 17px; background: #222; border: 1px solid #888; font-size: 12px; line-height: 15px; }
```
